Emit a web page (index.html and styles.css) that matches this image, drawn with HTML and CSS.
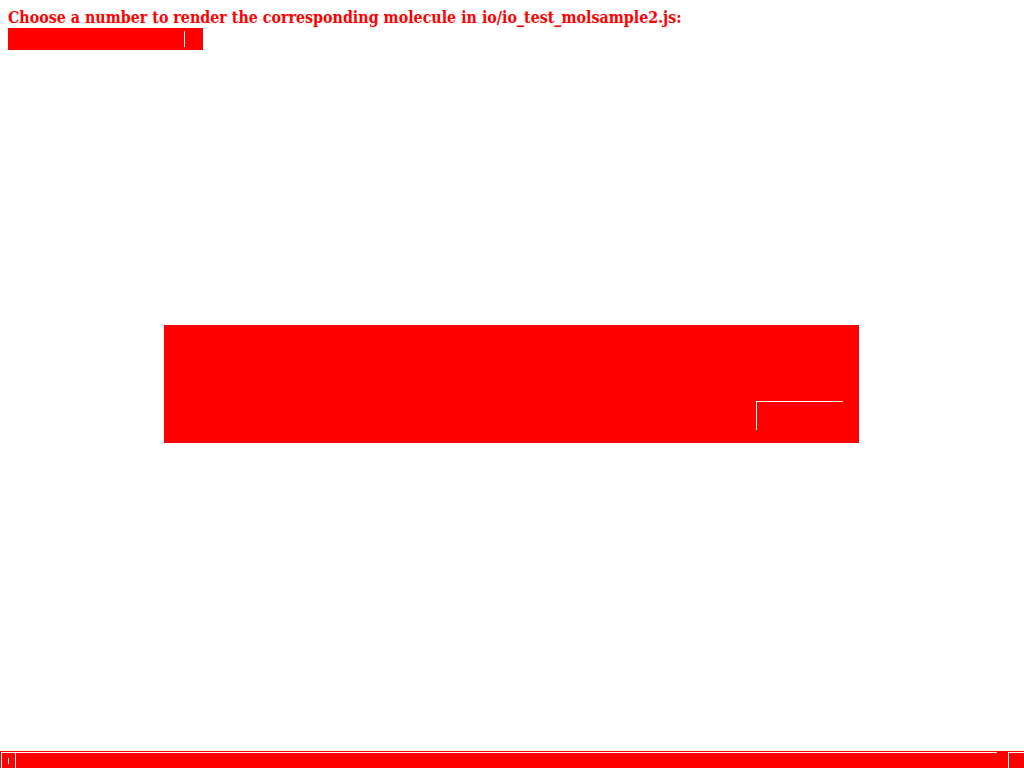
FILE: index.html
```html
<!DOCTYPE html>
<html>
<head>
<meta charset="utf-8">
<title>Molecule sample</title>
<link rel="stylesheet" href="styles.css">
</head>
<body>
<div class="page">
  <header class="head">
    <div class="title">Choose a number to render the corresponding molecule in io/io_test_molsample2.js:</div>
    <div class="select"><span class="select-btn"></span></div>
  </header>
  <main class="stage">
    <div class="canvas"><span class="corner"></span></div>
  </main>
  <div class="hbar">
    <span class="hbar-left"><span class="tick"></span></span>
    <span class="hbar-track"></span>
    <span class="hbar-right"></span>
  </div>
</div>
</body>
</html>
```
FILE: styles.css
```css
html, body {
  margin: 0;
  padding: 0;
  background: #fff;
}
.page {
  display: grid;
  width: 1024px;
  height: 768px;
  overflow: hidden;
}
.head {
  grid-area: 1 / 1;
  align-self: start;
  justify-self: start;
  padding: 8px 0 0 8px;
  display: flex;
  flex-direction: column;
  align-items: flex-start;
}
.title {
  font-family: "DejaVu Serif Condensed", "DejaVu Serif", serif;
  font-stretch: condensed;
  font-weight: bold;
  font-size: 15.85px;
  line-height: 19px;
  color: #ff0000;
  -webkit-font-smoothing: none;
  white-space: nowrap;
}
.select {
  margin-top: 1px;
  width: 195px;
  height: 22px;
  background: #ff0000;
  display: flex;
  justify-content: flex-end;
  align-items: center;
}
.select-btn {
  width: 18px;
  height: 16px;
  border-left: 1px solid #fff;
}
.stage {
  grid-area: 1 / 1;
  place-self: center;
}
.canvas {
  width: 695px;
  height: 118px;
  margin-right: 1px;
  background: #ff0000;
  display: flex;
  justify-content: flex-end;
  align-items: flex-start;
}
.corner {
  width: 86px;
  height: 28px;
  margin-top: 76px;
  margin-right: 16px;
  border-top: 1px solid #fff;
  border-left: 1px solid #fff;
}
.hbar {
  grid-area: 1 / 1;
  align-self: end;
  height: 16px;
  border-top: 1px solid #ff0000;
  background: #ff0000;
  display: flex;
}
.hbar-left {
  width: 13px;
  border-top: 1px solid #fff;
  border-left: 1px solid #fff;
  border-right: 1px solid #fff;
  margin-left: 1px;
  display: flex;
  justify-content: center;
  align-items: center;
}
.tick {
  width: 1px;
  height: 6px;
  background: #fff;
}
.hbar-track {
  flex: 1;
  border-top: 1px solid #fff;
}
.hbar-right {
  width: 15px;
  margin-left: 11px;
  border-top: 1px solid #fff;
  border-left: 1px solid #fff;
}
```
